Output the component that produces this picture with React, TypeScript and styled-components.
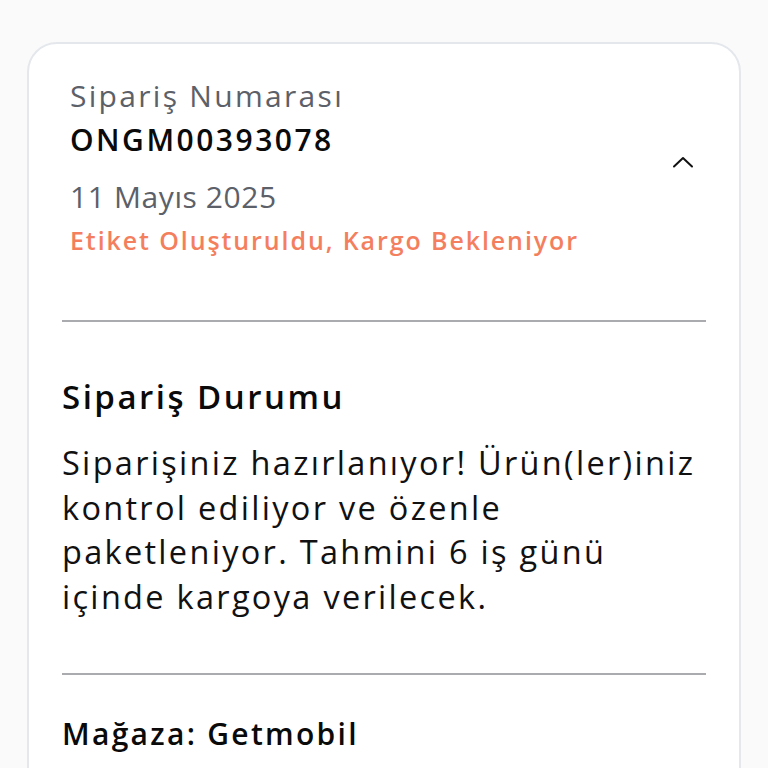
import { ReactElement } from "react";
import styled, { createGlobalStyle } from "styled-components";

const GlobalStyle = createGlobalStyle`
  html, body {
    margin: 0;
    padding: 0;
    background: #fafafb;
    font-family: "Open Sans", "Noto Sans", sans-serif;
  }
`;

const Page = styled.main`
  padding: 42px 27px 0;
  height: 768px;
  box-sizing: border-box;
  overflow: hidden;
`;

const Card = styled.section`
  background: #ffffff;
  border: 2px solid #e4e7eb;
  border-radius: 30px;
  padding: 0 33px;
  min-height: 900px;
`;

const Header = styled.div`
  display: flex;
  align-items: center;
  justify-content: space-between;
  padding: 31px 12px 58px 8px;
`;

const OrderInfo = styled.div`
  display: flex;
  flex-direction: column;
`;

const Label = styled.span<{ $spacing: number }>`
  font-size: 30px;
  line-height: 42px;
  letter-spacing: ${({ $spacing }) => $spacing}px;
  color: #5c6068;
`;

const OrderNumber = styled.span`
  font-size: 30px;
  font-weight: 600;
  line-height: 44px;
  letter-spacing: 2.5px;
  color: #0a0a0a;
  margin-top: 1px;
  margin-bottom: 14px;
`;

const Status = styled.span`
  font-size: 25px;
  font-weight: 600;
  line-height: 44px;
  letter-spacing: 1.9px;
  color: #f47f5f;
`;

const ToggleButton = styled.button`
  border: none;
  background: none;
  padding: 0;
  display: flex;
  align-items: center;
  margin-bottom: 14px;
`;

const Divider = styled.hr`
  border: none;
  height: 2px;
  background: #a9abaf;
  margin: 0;
`;

const Section = styled.div`
  padding: 53px 0 54px;
`;

const SectionTitle = styled.h2`
  margin: 0 0 22px;
  font-size: 33px;
  font-weight: 600;
  line-height: 44px;
  letter-spacing: 2.5px;
  color: #0a0a0a;
`;

const Body = styled.p`
  margin: 0;
  font-size: 32.5px;
  line-height: 44.5px;
  letter-spacing: 2.3px;
  color: #111111;
`;

const Store = styled.div`
  padding: 37px 0;
  font-size: 30px;
  font-weight: 600;
  line-height: 44px;
  letter-spacing: 2.3px;
  color: #0a0a0a;
`;

export default function App(): ReactElement {
  return (
    <>
      <GlobalStyle />
      <Page>
        <Card>
          <Header>
            <OrderInfo>
              <Label $spacing={2.3}>Sipariş Numarası</Label>
              <OrderNumber>ONGM00393078</OrderNumber>
              <Label $spacing={0.6}>11 Mayıs 2025</Label>
              <Status>Etiket Oluşturuldu, Kargo Bekleniyor</Status>
            </OrderInfo>
            <ToggleButton type="button" aria-label="Daralt">
              <svg width="22" height="12" viewBox="0 0 22 12" fill="none">
                <path
                  d="M2 10.5 L11 2 L20 10.5"
                  stroke="#111"
                  strokeWidth="2"
                  strokeLinecap="round"
                  strokeLinejoin="round"
                />
              </svg>
            </ToggleButton>
          </Header>
          <Divider />
          <Section>
            <SectionTitle>Sipariş Durumu</SectionTitle>
            <Body>
              Siparişiniz hazırlanıyor! Ürün(ler)iniz
              <br />
              kontrol ediliyor ve özenle
              <br />
              paketleniyor. Tahmini 6 iş günü
              <br />
              içinde kargoya verilecek.
            </Body>
          </Section>
          <Divider />
          <Store>Mağaza: Getmobil</Store>
        </Card>
      </Page>
    </>
  );
}
